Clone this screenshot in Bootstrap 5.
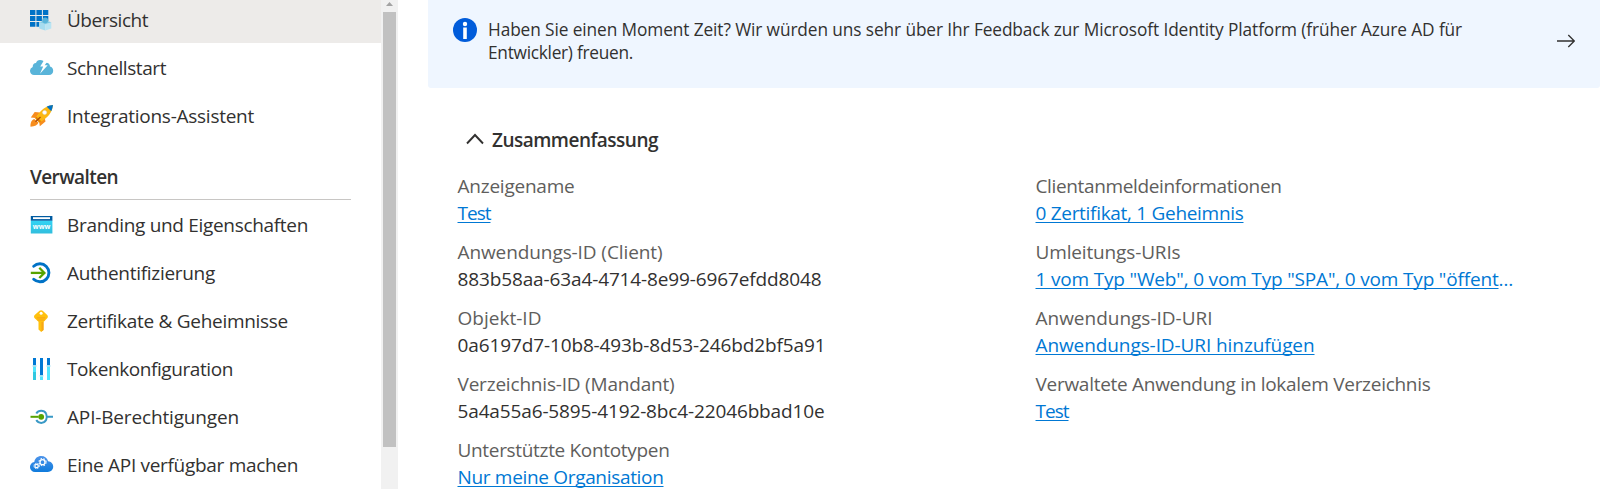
<!DOCTYPE html>
<html lang="de">
<head>
<meta charset="utf-8">
<meta name="viewport" content="width=device-width, initial-scale=1">
<title>Test – App-Registrierung</title>
<link href="https://cdn.jsdelivr.net/npm/bootstrap@5.3.0/dist/css/bootstrap.min.css" rel="stylesheet">
<style>
body{font-family:"Open Sans","Noto Sans",sans-serif;font-size:19px;color:#323130;background:#fff;height:489px}
.side-menu{width:381px}
.side-menu .first-group{margin-top:-5px}
.side-item{height:48px;padding:1px 0 0 30px;gap:13px;line-height:47px;color:#323130;border-radius:0}
.side-item.active{background:#edebe9}
.side-item svg{width:24px;height:24px;flex:none;margin-top:-1px}
.side-item span{padding-top:2px}
.side-title{margin:0 30px;height:61px;padding-top:20px;line-height:36px;font-weight:600;border-bottom:1px solid #c8c6c4}
.scroll-track{width:17px;background:#f1f1f1}
.scroll-thumb{width:13px;height:435px;background:#c1c1c1}
.content-pane{padding-left:30px;padding-right:9px}
.feedback-bar{height:88px;background:#eff6ff;border-radius:0 0 3px 3px;padding:18px 25px 0;font-size:17.3px;line-height:23px}
.feedback-text{margin-left:11px}
.feedback-arrow{margin-top:14px}
.summary-title{padding:41px 0 0 38px;height:85px;font-weight:600;line-height:23px}
.summary-grid{padding-left:29.5px}
.summary-col{width:578px}
.entry{height:66px;line-height:27px}
.entry dt{font-weight:400;color:#605e5c}
.entry dd{margin:0}
.entry a,.entry .dots{color:#0078d4}
.entry a{text-decoration-thickness:1px;text-underline-offset:2px;text-decoration-skip-ink:none}
[data-w]{display:inline-block;white-space:nowrap}
</style>
<script src="https://cdn.jsdelivr.net/npm/bootstrap@5.3.0/dist/js/bootstrap.bundle.min.js"></script>
</head>
<body class="d-flex overflow-hidden">
<nav class="side-menu flex-shrink-0 overflow-hidden">
  <div class="first-group">
    <a class="side-item active d-flex align-items-center text-decoration-none" href="#">
      <svg viewBox="0 0 24 24"><path fill="#0072c6" d="M0 3h5.400v5H0zM6.400 3h5.500v5H6.400zM12.900 3h5.400v5h-5.400zM0 9h5.400v5H0zM6.400 9h5.500v5H6.400zM12.900 9h5.400v5h-5.400zM0 15h5.400v4.800H0zM6.400 15h5.500v4.800H6.400z"/><path fill="#edebe9" d="M9.300 14.300h3v6h-3z"/><path fill="#a5dcf0" d="M9.200 15.200l6.100 2v6.300l-6.100-2z"/><path fill="#b8e4f3" d="M21.300 15.200l-6 2v6.300l6-2z"/><path fill="#7fcbe6" d="M9.200 15.200l6-2 6.100 2-6 2z"/><circle cx="15.200" cy="13.300" r="2.900" fill="#59b4d9"/></svg>
      <span data-w="81">Übersicht</span></a>
    <a class="side-item d-flex align-items-center text-decoration-none" href="#">
      <svg viewBox="0 0 24 24"><path fill="#59b4d9" d="M4 20a4.200 4.200 0 0 1-1.300-8.100C2.700 9.300 4 8 6 8c.6-2 2-3 4-3 2.500 0 4 1.200 5 3 2.800-.7 5 1 5 3.600 2 .4 3.200 2 3.200 4.200 0 2.600-1.600 4.200-4.200 4.200z"/><path fill="#fff" d="M14.500 4.500L10.200 11.500h3L10 18.700l7.700-8.500h-3l4-5.700z"/></svg>
      <span data-w="99">Schnellstart</span></a>
    <a class="side-item d-flex align-items-center text-decoration-none" href="#">
      <svg viewBox="0 0 24 24"><path fill="#f78d1e" d="M10 9.500L4.700 9 .8 14.500l5 .4zM14.500 14l1 4.500-5.700 4.700-.7-5z"/><path fill="#f78d1e" d="M.5 23.700c-.3-3 .7-6.700 3.700-7.700l4.300 3.500c-1 2.500-3.500 4-8 4.200z"/><path fill="#fcb813" d="M23 2c-7 .8-13.500 5.500-17.700 13.500l4 4C17.500 15.500 22.500 9 23 2z"/><path fill="#e58500" d="M5.300 15.500l4 4 2-1.200-5-4.800z"/><path fill="#0072c6" d="M23 2c-2.400.2-4.400.7-6.300 1.700l4.600 4.500C22.200 6.200 22.700 4 23 2z"/><circle cx="14.600" cy="9.500" r="2" fill="#fff" stroke="#dbe3ea" stroke-width=".5"/><path stroke="#a8480e" stroke-width="1.200" d="M5.500 18.800l5-4.800"/></svg>
      <span data-w="187">Integrations-Assistent</span></a>
  </div>
  <div class="side-title"><span data-w="88">Verwalten</span></div>
  <div>
    <a class="side-item d-flex align-items-center text-decoration-none" href="#">
      <svg viewBox="0 0 24 24"><defs><linearGradient id="g1" x2="0" y2="1"><stop stop-color="#32d4f5"/><stop offset="1" stop-color="#32bedd"/></linearGradient></defs><path fill="url(#g1)" d="M.8 8.500h21.600v13H.8z"/><path fill="#005ba1" d="M.8 4h21.600v4.700H.8z"/><path fill="#fff" d="M3 5.200h17v1.900H3z"/><text x="11.600" y="16.700" font-size="7.200" font-weight="700" text-anchor="middle" textLength="17.500" lengthAdjust="spacingAndGlyphs" fill="#fff">www</text></svg>
      <span data-w="241">Branding und Eigenschaften</span></a>
    <a class="side-item d-flex align-items-center text-decoration-none" href="#">
      <svg viewBox="0 0 24 24" fill="none"><path stroke="#0072c6" stroke-width="2.900" stroke-linecap="round" d="M3.700 6.300A9 9 0 1 1 3.700 19.300"/><path stroke="#57a300" stroke-width="2.300" d="M.8 12.900h13"/><path stroke="#57a300" stroke-width="2.300" d="M9.300 7.800l5.100 5.100-5.100 5.100"/></svg>
      <span data-w="148">Authentifizierung</span></a>
    <a class="side-item d-flex align-items-center text-decoration-none" href="#">
      <svg viewBox="0 0 24 24"><path fill="#ffc10e" d="M9.500 2.800c1-.9 2.200-.9 3.200 0l4.500 4.300c.9 1 .9 2.200 0 3.200L13.500 14v8l-2.300 2-2.700-2.500v-7.700L4.700 10.200c-.9-1-.9-2.200 0-3.200z"/><path fill="#f8a616" d="M6.700 9.200h8.600v1.300H6.700zM11.500 14h2v8l-2 1.500zM7.500 11.500h7.200v1H7.500z"/><circle cx="11.100" cy="5.200" r="1.500" fill="#fff"/></svg>
      <span data-w="221">Zertifikate &amp; Geheimnisse</span></a>
    <a class="side-item d-flex align-items-center text-decoration-none" href="#">
      <svg viewBox="0 0 24 24"><path fill="#0078d4" d="M3 2h3v7H3zM10 2h3v17h-3zM17 2h3v7h-3z"/><path fill="#9cdcf0" d="M2.700 9h3.600v2H2.700zM9.700 19h3.600v1.500H9.700zM16.700 9h3.600v2h-3.600z"/><path fill="#32c8e0" d="M3 11h3v13H3z"/><path fill="#50e6ff" d="M10 20.500h3V24h-3zM17 11h3v13h-3zM3 11h3v5H3z"/></svg>
      <span data-w="166">Tokenkonfiguration</span></a>
    <a class="side-item d-flex align-items-center text-decoration-none" href="#">
      <svg viewBox="0 0 24 24" fill="none"><path stroke="#3999c6" stroke-width="2" d="M6.300 9.500a5.700 5.700 0 0 1 9.800 0M6.300 16.100a5.700 5.700 0 0 0 9.800 0M16.100 9.500q1.300 3.300 0 6.600M17 12.800h6"/><path stroke="#57a300" stroke-width="2" d="M.5 12.800h8"/><circle cx="11.200" cy="12.800" r="2.900" fill="#57a300"/></svg>
      <span data-w="172">API-Berechtigungen</span></a>
    <a class="side-item d-flex align-items-center text-decoration-none" href="#">
      <svg viewBox="0 0 24 24"><defs><linearGradient id="g2" x2="0" y2="1"><stop stop-color="#4e94ea"/><stop offset="1" stop-color="#0f7bdc"/></linearGradient></defs><path fill="url(#g2)" d="M5 20a5 5 0 0 1-5-5.200c0-2.500 1.700-4.500 4.300-4.900C4.800 6.300 7.600 4 11.200 4c3.500 0 6 2 6.900 5.300 3 .3 5.100 2.400 5.100 5.300 0 3.200-2.300 5.400-5.400 5.400z"/><g fill="none" stroke="#fff"><circle cx="12.500" cy="10.200" r="2.500" stroke-width="1.300"/><circle cx="12.500" cy="10.200" r="3.600" stroke-width="1.100" stroke-dasharray="1.500 1.400"/><circle cx="6.600" cy="14" r="1.700" stroke-width="1.200"/><circle cx="6.600" cy="14" r="2.700" stroke-width="1" stroke-dasharray="1.200 1"/></g></svg>
      <span data-w="231">Eine API verfügbar machen</span></a>
  </div>
</nav>
<div class="scroll-track flex-shrink-0 d-flex flex-column align-items-center">
  <svg width="17" height="12" viewBox="0 0 17 12" class="flex-shrink-0"><path fill="#a3a3a3" d="M5 6l3.500-4L12 6z"/></svg>
  <div class="scroll-thumb flex-shrink-0"></div>
</div>
<main class="content-pane flex-grow-1">
  <div class="feedback-bar d-flex align-items-start">
    <svg width="24" height="24" viewBox="0 0 24 24" class="flex-shrink-0"><circle cx="12" cy="12" r="12" fill="#015cda"/><circle cx="12" cy="6" r="2.200" fill="#fff"/><path fill="#fff" d="M10.200 9.500h3.600V21h-3.600z"/></svg>
    <div class="feedback-text flex-grow-1"><span data-w="974">Haben Sie einen Moment Zeit? Wir würden uns sehr über Ihr Feedback zur Microsoft Identity Platform (früher Azure AD für</span><br><span data-w="145">Entwickler) freuen.</span></div>
    <svg width="18" height="18" viewBox="0 0 18 18" class="feedback-arrow flex-shrink-0" fill="none" stroke="#323130" stroke-width="1.300"><path d="M0 9h17.300M11.300 3l6 6-6 6"/></svg>
  </div>
  <div class="summary-title d-flex align-items-start">
    <svg width="18" height="22" viewBox="0 0 18 22" fill="none" stroke="#323130" stroke-width="1.900"><path d="M1 14.500L9 6l8 8.500"/></svg>
    <span class="ms-2" data-w="166">Zusammenfassung</span>
  </div>
  <div class="summary-grid d-flex">
    <dl class="summary-col flex-shrink-0 mb-0">
      <div class="entry"><dt><span data-w="117">Anzeigename</span></dt><dd><a href="#" data-w="33">Test</a></dd></div>
      <div class="entry"><dt><span data-w="205">Anwendungs-ID (Client)</span></dt><dd><span data-w="364">883b58aa-63a4-4714-8e99-6967efdd8048</span></dd></div>
      <div class="entry"><dt><span data-w="84">Objekt-ID</span></dt><dd><span data-w="368">0a6197d7-10b8-493b-8d53-246bd2bf5a91</span></dd></div>
      <div class="entry"><dt><span data-w="217">Verzeichnis-ID (Mandant)</span></dt><dd><span data-w="367">5a4a55a6-5895-4192-8bc4-22046bbad10e</span></dd></div>
      <div class="entry"><dt><span data-w="212">Unterstützte Kontotypen</span></dt><dd><a href="#" data-w="206">Nur meine Organisation</a></dd></div>
    </dl>
    <dl class="mb-0">
      <div class="entry"><dt><span data-w="246">Clientanmeldeinformationen</span></dt><dd><a href="#" data-w="208">0 Zertifikat, 1 Geheimnis</a></dd></div>
      <div class="entry"><dt><span data-w="145">Umleitungs-URIs</span></dt><dd class="text-nowrap"><a href="#" data-w="463">1 vom Typ "Web", 0 vom Typ "SPA", 0 vom Typ "öffent</a><span class="dots" data-w="15">…</span></dd></div>
      <div class="entry"><dt><span data-w="177">Anwendungs-ID-URI</span></dt><dd><a href="#" data-w="279">Anwendungs-ID-URI hinzufügen</a></dd></div>
      <div class="entry"><dt><span data-w="395">Verwaltete Anwendung in lokalem Verzeichnis</span></dt><dd><a href="#" data-w="33">Test</a></dd></div>
    </dl>
  </div>
</main>
<script>
// Track each label so that it fills its nominal width
document.querySelectorAll('[data-w]').forEach(el => {
  const gap = (el.dataset.w - el.getBoundingClientRect().width) / el.textContent.length;
  el.style.letterSpacing = gap.toFixed(3) + 'px';
});
</script>
</body>
</html>
